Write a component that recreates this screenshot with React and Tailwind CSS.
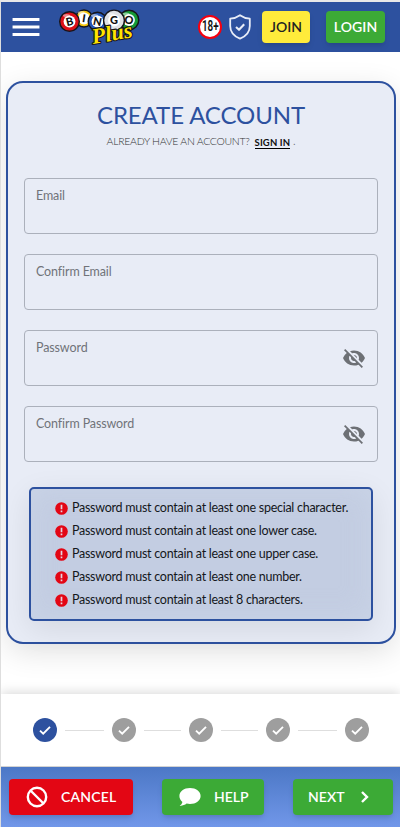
import React from 'react'
import {
  MdVisibilityOff,
  MdMenu
} from 'react-icons/md'

const balls = [
  { letter: 'I', cx: 24, cy: 10.5, r: 8.5, fill: '#f6c90e', rotate: 8 },
  { letter: 'B', cx: 9.5, cy: 13.5, r: 9.8, fill: '#dc0f18', rotate: -14 },
  { letter: 'O', cx: 69, cy: 12, r: 9.8, fill: '#159a35', rotate: 8 },
  { letter: 'N', cx: 37.5, cy: 13.5, r: 9.3, fill: '#2355b5', rotate: 12 },
  { letter: 'G', cx: 54, cy: 12.5, r: 10.4, fill: '#dfe1e5', rotate: 0 }
]

const fields = [
  { label: 'Email' },
  { label: 'Confirm Email' },
  { label: 'Password', secret: true },
  { label: 'Confirm Password', secret: true }
]

const rules = [
  'Password must contain at least one special character.',
  'Password must contain at least one lower case.',
  'Password must contain at least one upper case.',
  'Password must contain at least one number.',
  'Password must contain at least 8 characters.'
]

function Logo() {
  return (
    <svg className="ml-[18px] h-[38px] w-[82px] shrink-0 overflow-visible" viewBox="0 0 82 38">
      {balls.map((b) => (
        <g key={b.letter}>
          <circle cx={b.cx} cy={b.cy} r={b.r} fill={b.fill} stroke="#15151b" strokeWidth="1.4" />
          <ellipse cx={b.cx - 3} cy={b.cy - 6} rx="3.5" ry="1.6" fill="#fff" opacity="0.5" />
          <circle cx={b.cx} cy={b.cy} r="5.9" fill="#fff" />
          <text
            x={b.cx}
            y={b.cy + 3.9}
            textAnchor="middle"
            fontFamily="Lato, sans-serif"
            fontWeight="900"
            fontSize="11"
            fill="#111"
            transform={`rotate(${b.rotate} ${b.cx} ${b.cy})`}
          >
            {b.letter}
          </text>
        </g>
      ))}
      <text
        x="33"
        y="36"
        fontFamily="'Liberation Serif', serif"
        fontStyle="italic"
        fontWeight="700"
        fontSize="22"
        textLength="41"
        lengthAdjust="spacingAndGlyphs"
        fill="#ffe400"
        stroke="#15151b"
        strokeWidth="2.2"
        strokeLinejoin="round"
        paintOrder="stroke"
        transform="rotate(-10 33 36)"
      >
        Plus
      </text>
    </svg>
  )
}

function AgeBadge() {
  return (
    <div className="flex size-6 shrink-0 items-center justify-center rounded-full border-[2.5px] border-[#f5000f] bg-white font-['Roboto',sans-serif] text-[14.5px] leading-4 font-semibold text-[#111]">
      <span className="-mx-2 scale-x-[0.68]">18+</span>
    </div>
  )
}

function Shield() {
  return (
    <svg className="ml-[7px] h-[26px] w-[22px] shrink-0" viewBox="0 0 22 26" fill="none" stroke="#e8edf8" strokeWidth="1.8" strokeLinejoin="round">
      <path d="M11 1.2C8.2 3.2 5 4.4 1.2 4.7V12c0 6 3.8 10.2 9.8 12.7 6-2.5 9.8-6.7 9.8-12.7V4.7C17 4.4 13.8 3.2 11 1.2Z" />
      <path d="m7 13 3 2.8 5.2-5.6" strokeWidth="2.1" />
    </svg>
  )
}

function Header() {
  return (
    <header className="flex h-[50px] items-center bg-[#2d519f] pl-[9px] pr-[15px]">
      <MdMenu className="size-8 shrink-0 scale-x-[1.12] scale-y-[1.12] text-white" />
      <Logo />
      <div className="ml-auto flex items-center">
        <AgeBadge />
        <Shield />
        <button className="ml-[11px] h-8 w-12 rounded bg-[#ffeb3b] pb-px text-[14px] font-semibold text-[#222] shadow-md">
          JOIN
        </button>
        <button className="ml-4 h-8 w-[59px] rounded bg-[#3caa36] pb-px text-[14px] font-semibold tracking-[0.1px] text-white shadow-md">
          LOGIN
        </button>
      </div>
    </header>
  )
}

function Field({ label, secret }) {
  return (
    <div className="flex h-14 justify-between rounded border border-[#abb0bb] pl-[11px] pr-[11px]">
      <label className="pt-[9px] text-[12.5px] leading-4 tracking-[-0.12px] text-[#707379]">{label}</label>
      {secret && <MdVisibilityOff className="size-6 self-center text-[#6d7075]" />}
    </div>
  )
}

function ErrorIcon() {
  return (
    <svg className="mr-[3px] size-[15px] shrink-0" viewBox="0 0 15 15">
      <circle cx="7.5" cy="7.5" r="6.3" fill="#e30614" />
      <path d="M7.5 3.8v4.4M7.5 9.4v1.9" stroke="#e3d5e0" strokeWidth="1.7" />
    </svg>
  )
}

function Step({ active }) {
  return (
    <div className={`flex size-6 shrink-0 items-center justify-center rounded-full ${active ? 'bg-[#2d519f]' : 'bg-[#9e9e9e]'}`}>
      <svg className="h-[9px] w-3" viewBox="0 0 12 9" fill="none" stroke="#fff" strokeWidth="1.9">
        <path d="m1 4.6 3.2 3L11 .9" />
      </svg>
    </div>
  )
}

function Line({ width }) {
  return <div className={`mx-2 h-px shrink-0 bg-[#dedede] ${width}`}></div>
}

export default function App() {
  return (
    <div className="flex h-[827px] w-[400px] flex-col overflow-hidden border-l border-t-2 border-l-[#dedede] border-t-[#e8e8e8] bg-white font-['Lato',sans-serif]">
      <Header />

      <main className="grow px-[5px] pr-1 pt-[29px]">
        <section className="h-[563px] rounded-[17px] border-2 border-[#2d519f] bg-[#e8ecf6] px-4 shadow-[0_8px_30px_rgba(0,0,0,0.12)]">
          <h1 className="pt-4 text-center text-[24px] leading-8 text-[#2d519f]">
            <span className="tracking-[-0.1px]">CREATE ACCOUNT</span>
          </h1>
          <p className="mt-px flex h-5 items-center justify-center text-[10.5px] text-[#66696f]">
            <span className="font-light tracking-[-0.3px] text-[#333]">ALREADY HAVE AN ACCOUNT?</span>
            <a href="#" className="mt-0.5 ml-[5px] border-b border-black text-[9.5px] leading-[10px] font-bold tracking-[0.15px] text-[#111]">SIGN IN</a>
            <span className="ml-[3px] text-[9px]">.</span>
          </p>

          <div className="mt-[26px] flex flex-col gap-5">
            {fields.map((f) => (
              <Field key={f.label} {...f} />
            ))}
          </div>

          <ul className="mx-[5px] mt-[25px] h-[134px] rounded-[5px] border-2 border-[#2d519f] bg-[#c3cde2] pl-[23px] pt-2 shadow-[0_8px_30px_rgba(0,0,0,0.09),inset_0_0_28px_rgba(215,225,240,0.35)]">
            {rules.map((rule) => (
              <li key={rule} className="flex h-[23px] items-center text-[12.5px] text-[#14171c]">
                <ErrorIcon />
                <span className="whitespace-nowrap tracking-[-0.27px]">{rule}</span>
              </li>
            ))}
          </ul>
        </section>
      </main>

      <div className="flex h-[73px] shrink-0 items-center border-b border-[#d3d3d3] bg-white pl-8 shadow-[0_-2px_10px_rgba(0,0,0,0.14)]">
        <Step active />
        <Line width="w-[39px]" />
        <Step />
        <Line width="w-[37px]" />
        <Step />
        <Line width="w-[37px]" />
        <Step />
        <Line width="w-[39px]" />
        <Step />
      </div>

      <footer className="flex h-[60px] shrink-0 items-center justify-between bg-linear-to-b from-[#4c78c6] to-[#7197e9] pl-2 pr-[7px] text-[14px] font-semibold text-white">
        <button className="flex h-9 w-[124px] items-center rounded bg-[#e30614] pl-4 shadow-md">
          <svg className="size-6" viewBox="0 0 24 24" fill="none" stroke="currentColor" strokeWidth="2.4">
            <circle cx="12" cy="12" r="9.2" />
            <path d="m5.5 5.5 13 13" />
          </svg>
          <span className="ml-3 pb-px tracking-[0.2px]">CANCEL</span>
        </button>
        <button className="flex h-9 w-[102px] items-center rounded bg-[#3caa36] pl-4 shadow-md">
          <svg className="h-5 w-6" viewBox="0 0 24 20" fill="currentColor">
            <path d="M12 1C6 1 1.4 4.4 1.4 9c0 2.5 1.2 4.5 3 5.900-.3 1.500-1.300 2.900-2.700 4 3 .1 5.200-1 6.900-2.300 1.100.3 2.200.4 3.400.4 5.900 0 10.600-3.400 10.600-8S17.900 1 12 1Z" />
          </svg>
          <span className="ml-3 pb-px">HELP</span>
        </button>
        <button className="flex h-9 w-[100px] items-center rounded bg-[#3caa36] pl-[15px] shadow-md">
          <span className="pb-px tracking-[0.1px]">NEXT</span>
          <svg className="mr-6 ml-auto h-3 w-2" viewBox="0 0 8 12" fill="none" stroke="currentColor" strokeWidth="2.4">
            <path d="m1 1 5 5-5 5" />
          </svg>
        </button>
      </footer>
    </div>
  )
}
